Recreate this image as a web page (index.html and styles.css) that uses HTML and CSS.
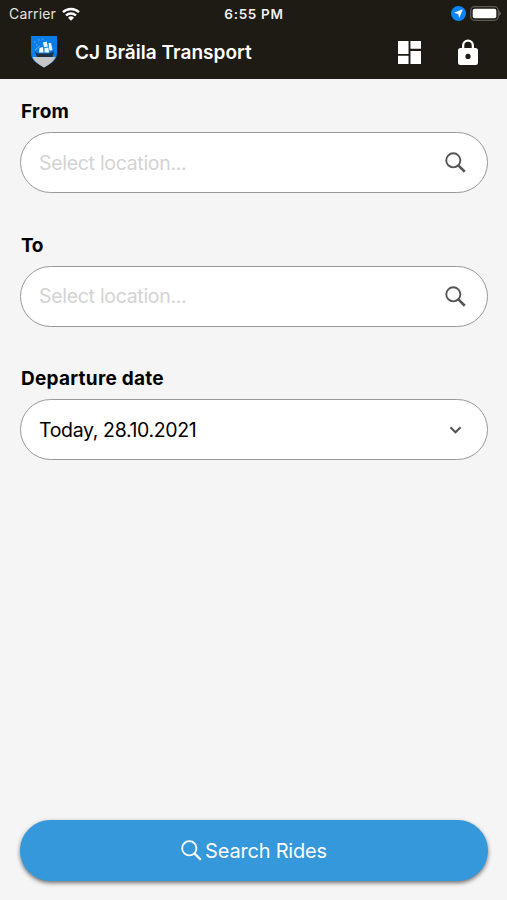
FILE: index.html
```html
<!DOCTYPE html>
<html lang="en">
<head>
<meta charset="utf-8">
<title>CJ Brăila Transport</title>
<link rel="stylesheet" href="styles.css">
</head>
<body>
<header class="top">
  <div class="status">
    <div class="carrier"><span>Carrier</span>
      <svg class="wifi" viewBox="0 0 18 14"><g fill="none" stroke="#fff" stroke-width="2.4"><path d="M1 5.2a11.500 11.500 0 0 1 16 0"/><path d="M4 8.500a7.200 7.200 0 0 1 10 0"/></g><path fill="#fff" d="M6 10.700a4.300 4.300 0 0 1 6 0l-3 3z"/></svg>
    </div>
    <div class="clock">6:55 PM</div>
    <div class="indicators">
      <svg class="location" viewBox="0 0 15 15"><circle cx="7.500" cy="7.500" r="7.500" fill="#0a84ff"/><path fill="#fff" d="M11.800 3.200 8.300 12 7.200 8 3 6.800z"/></svg>
      <svg class="battery" viewBox="0 0 31 15"><rect x=".7" y=".7" width="27.600" height="13.600" rx="4" fill="none" stroke="#5e5b57" stroke-width="1.300"/><rect x="2.700" y="2.700" width="23.600" height="9.600" rx="2" fill="#fff"/><path fill="#777571" d="M29.300 5q3 2.500 0 5z"/></svg>
    </div>
  </div>
  <div class="appbar">
    <svg class="crest" viewBox="0 0 28 32"><path fill="#0a7ee8" d="M1 0h26v17c0 7-5 10-13 14.500C6 27 1 24 1 17z"/><path fill="#c6c6c6" d="M2.500 21h23c-1.500 4-5.500 7-11.500 10.500C8 28 4 25 2.500 21z"/><path fill="#1d2f40" d="M5 16l3 1.500h11l5-2-1.500 5.500H7z"/><path fill="#eef6ff" d="M9.500 12l3.500-1 .5 5.500H9zM13 6.500l3.500-1 1.500 5-4 .8zM14.500 12l4-.6.500 5h-4.500zM18.500 7h2.500l1.500 7-3 .8z"/><path fill="none" stroke="#8ac2f8" stroke-width=".8" d="M5 14l5-4M4 6h1.500M8 4h1.500M6 9h1.500M12 3h1.500"/></svg>
    <h1 class="title">CJ Brăila Transport</h1>
    <svg class="dash" viewBox="0 0 24 24"><path fill="#fff" d="M0 0h11v13.500H0zM13 0h11v8H13zM0 15.500h11V24H0zM13 10.500h11V24H13z"/></svg>
    <svg class="lock" viewBox="0 0 20 27"><path fill="#fff" fill-rule="evenodd" d="M17.500 9H16V6.500a6 6 0 0 0-12 0V9H2.500A2.500 2.500 0 0 0 0 11.500v12A2.500 2.500 0 0 0 2.500 26h15a2.500 2.500 0 0 0 2.500-2.500v-12A2.500 2.500 0 0 0 17.500 9zM6.300 9V6.500a3.700 3.700 0 0 1 7.400 0V9zM10 20a2.600 2.600 0 1 1 0-5.200 2.600 2.600 0 0 1 0 5.200z"/></svg>
  </div>
</header>
<main class="form">
  <section class="field">
    <h2 class="label from">From</h2>
    <div class="box"><span class="hint">Select location...</span>
      <svg class="search" viewBox="0 0 22 22"><g fill="none" stroke="#555"><circle cx="8.700" cy="8.700" r="7.400" stroke-width="2"/><path stroke-width="2.700" d="M14 14l6.700 6.700"/></g></svg></div>
  </section>
  <section class="field">
    <h2 class="label to">To</h2>
    <div class="box"><span class="hint">Select location...</span>
      <svg class="search" viewBox="0 0 22 22"><g fill="none" stroke="#555"><circle cx="8.700" cy="8.700" r="7.400" stroke-width="2"/><path stroke-width="2.700" d="M14 14l6.700 6.700"/></g></svg></div>
  </section>
  <section class="field">
    <h2 class="label departure">Departure date</h2>
    <div class="box"><span class="date">Today, 28.10.2021</span>
      <svg class="chevron" viewBox="0 0 12 8"><path fill="none" stroke="#555" stroke-width="2.100" d="M.9 1.200 6 6.200l5.100-5"/></svg></div>
  </section>
</main>
<footer class="bottom">
  <button class="submit" type="button">
    <svg class="search" viewBox="0 0 22 22"><g fill="none" stroke="#fff"><circle cx="8.700" cy="8.700" r="7.500" stroke-width="1.900"/><path stroke-width="2.500" d="M14 14l6.700 6.700"/></g></svg><span class="submit-text">Search Rides</span>
  </button>
</footer>
</body>
</html>
```
FILE: styles.css
```css
* { box-sizing: border-box; }
body {
  margin: 0;
  height: 900px;
  display: flex;
  flex-direction: column;
  background: #f5f5f5;
  font-family: Inter, "Liberation Sans", sans-serif;
  color: #000;
}
svg { display: block; flex: none; }
span, h1, h2 { white-space: nowrap; }
.top { height: 79px; background: #1e1a14; color: #fff; }
.status {
  height: 27px;
  padding: 0 6px 0 9px;
  display: grid;
  grid-template-columns: 1fr auto 1fr;
  align-items: center;
}
.carrier { display: flex; align-items: center; gap: 6px; font-size: 14px; letter-spacing: .15px; color: #e4e3e2; }
.wifi { width: 18px; height: 14px; }
.clock { font-size: 13.5px; font-weight: 600; letter-spacing: .7px; color: #f0efee; margin-right: 2px; }
.indicators { display: flex; justify-content: flex-end; align-items: center; gap: 4px; }
.location { width: 15px; height: 15px; }
.battery { width: 31px; height: 15px; }
.appbar { height: 50px; display: flex; align-items: center; padding: 0 29px 0 30px; }
.crest { width: 28px; height: 32px; }
.title { margin: 2px auto 0 17px; font-size: 19px; font-weight: 600; line-height: 24px; letter-spacing: .03px; }
.dash { width: 23px; height: 23px; margin-right: 37px; }
.lock { width: 20px; height: 27px; }
.form { flex: 1; padding: 20px 19px 0 20px; display: flex; flex-direction: column; gap: 39.5px; }
.label { margin: 0 0 8px 1px; font-size: 19px; line-height: 25px; font-weight: 700; }
.from { letter-spacing: .3px; }
.to { letter-spacing: -.5px; }
.departure { letter-spacing: .25px; }
.box {
  height: 61px;
  border: 1px solid #999;
  border-radius: 31px;
  background: #fff;
  display: flex;
  align-items: center;
  justify-content: space-between;
  padding: 0 21px 0 18px;
  font-size: 19.5px;
}
.hint { color: #d3d3d3; letter-spacing: -.3px; }
.date { letter-spacing: -.35px; }
.search { width: 21px; height: 21px; }
.chevron { width: 13px; height: 8px; margin-right: 4px; }
.bottom { padding: 0 19px 19px 20px; }
.submit {
  width: 100%;
  height: 61px;
  padding: 0;
  border: 0;
  border-radius: 31px;
  background: #3498db;
  box-shadow: 0 2px 4px rgba(0, 0, 0, .55);
  color: #fff;
  font: 400 20px Inter, "Liberation Sans", sans-serif;
  letter-spacing: -.2px;
  display: flex;
  align-items: center;
  justify-content: center;
  gap: 3px;
}
```
